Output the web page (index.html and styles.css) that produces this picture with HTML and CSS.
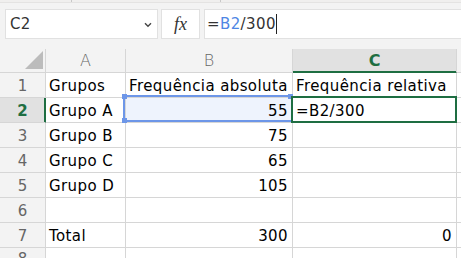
FILE: index.html
```html
<!DOCTYPE html>
<html lang="pt">
<head>
<meta charset="utf-8">
<title>Planilha</title>
<link rel="stylesheet" href="styles.css">
</head>
<body>
<div class="app">
  <div class="strip"><span class="tick tick-a"></span><span class="tick tick-b"></span></div>
  <div class="fbar">
    <div class="namebox">
      <span class="name">C2</span>
      <svg class="chev" width="8" height="6" viewBox="0 0 8 6"><path d="M1 1.2 L4 4.2 L7 1.2" fill="none" stroke="#444" stroke-width="1.4"/></svg>
    </div>
    <div class="fxbox"><span class="fx">fx</span></div>
    <div class="formula"><span>=</span><span class="ref">B2</span><span>/300</span><span class="caret"></span></div>
  </div>
  <div class="sheet">
    <div class="hd corner"><span class="tri"></span></div>
    <div class="hd col">A</div>
    <div class="hd col">B</div>
    <div class="hd col sel-col">C</div>
    <div class="hd col"></div>

    <div class="hd row">1</div>
    <div class="c">Grupos</div>
    <div class="c">Frequência absoluta</div>
    <div class="c">Frequência relativa</div>
    <div class="c"></div>

    <div class="hd row sel-row">2</div>
    <div class="c">Grupo A</div>
    <div class="c num refcell">55</div>
    <div class="c active">=B2/300</div>
    <div class="c"></div>

    <div class="hd row">3</div>
    <div class="c">Grupo B</div>
    <div class="c num">75</div>
    <div class="c"></div>
    <div class="c"></div>

    <div class="hd row">4</div>
    <div class="c">Grupo C</div>
    <div class="c num">65</div>
    <div class="c"></div>
    <div class="c"></div>

    <div class="hd row">5</div>
    <div class="c">Grupo D</div>
    <div class="c num">105</div>
    <div class="c"></div>
    <div class="c"></div>

    <div class="hd row">6</div>
    <div class="c"></div>
    <div class="c"></div>
    <div class="c"></div>
    <div class="c"></div>

    <div class="hd row">7</div>
    <div class="c">Total</div>
    <div class="c num">300</div>
    <div class="c num">0</div>
    <div class="c"></div>

    <div class="hd row last">8</div>
    <div class="c"></div>
    <div class="c"></div>
    <div class="c"></div>
    <div class="c"></div>
  </div>
</div>
</body>
</html>
```
FILE: styles.css
```css
* { box-sizing: border-box; }
html, body { margin: 0; padding: 0; }
body {
  width: 461px;
  height: 258px;
  overflow: hidden;
  background: #f3f3f3;
  font-family: "DejaVu Sans", sans-serif;
}
.app { display: flex; flex-direction: column; width: 461px; height: 258px; overflow: hidden; }

.strip {
  height: 4px;
  background: #f0efee;
  border-bottom: 1px solid #e4e3e2;
  display: flex;
  align-items: flex-start;
}
.tick { width: 1px; height: 2px; background: #c8c8c8; }
.tick-a { margin-left: 71px; }
.tick-b { margin-left: 148px; }

.fbar {
  display: flex;
  height: 46px;
  padding: 6px 0 10px 5px;
  background: #f3f3f3;
  gap: 3px;
}
.namebox, .fxbox, .formula {
  background: #fff;
  border: 1px solid #e1e1e1;
  height: 30px;
  display: flex;
  align-items: center;
}
.namebox { width: 153px; padding: 0 5px 0 4px; justify-content: space-between; }
.name { font-size: 15px; color: #333; letter-spacing: 0.4px; }
.chev { margin-top: 1px; }
.fxbox { width: 39px; justify-content: center; }
.fx { font-family: "Liberation Serif", serif; font-style: italic; font-size: 18px; color: #333; }
.formula { margin-left: 1px; flex: 1; padding-left: 2px; font-size: 15px; color: #333; margin-right: -20px; letter-spacing: 0.4px; }
.ref { color: #4f86e4; }
.caret { width: 1px; height: 20px; background: #222; margin-left: 0; }

.sheet {
  display: grid;
  grid-template-columns: 46px 80px 167px 164px 1fr;
  grid-template-rows: 24px repeat(8, 25px);
  background: #fff;
}
.hd {
  background: #f3f3f3;
  color: #666;
  border-right: 1px solid #d6d6d6;
  border-bottom: 1px solid #d6d6d6;
  font-size: 16px;
}
.corner { display: flex; align-items: flex-end; justify-content: flex-end; padding: 0 2px 3px 0; }
.tri {
  width: 18px; height: 18px;
  background: #bcbcbc;
  clip-path: polygon(100% 0, 100% 100%, 0 100%);
}
.col { text-align: center; line-height: 24px; font-weight: 300; }
.row { text-align: center; font-size: 15px; line-height: 22px; padding-top: 2px; }
.row.last { padding-top: 0; }
.sel-col {
  background: #e1e1e1;
  color: #1e6e42;
  font-weight: bold;
  border-bottom-color: #1e6e42;
  box-shadow: inset 0 -1px 0 #1e6e42;
}
.sel-row {
  background: #e1e1e1;
  color: #1e6e42;
  font-weight: bold;
  border-right-color: #1e6e42;
  box-shadow: inset -1px 0 0 #1e6e42;
}

.c {
  border-right: 1px solid #d6d6d6;
  border-bottom: 1px solid #d6d6d6;
  font-size: 15px;
  color: #000;
  line-height: 22px;
  letter-spacing: 0.4px;
  padding: 2px 4px 0 3px;
  white-space: nowrap;
  overflow: visible;
  position: relative;
}
.num { text-align: right; }
.refcell { background: #eef3fd; }
.refcell::after {
  content: "";
  position: absolute;
  left: -3px; top: -3px; right: -1px; bottom: 0;
  border: 2px solid #6d96e8;
  pointer-events: none;
}
.refcell::before {
  content: "";
  position: absolute;
  left: -4px; top: -4px;
  width: 5px; height: 5px;
  background: #6d96e8;
  box-shadow: 0 24px 0 #6d96e8, 166px 0 0 #6d96e8;
  z-index: 2;
}
.active { z-index: 3; }
.active::after {
  content: "";
  position: absolute;
  left: -2px; top: -2px; right: -1px; bottom: -1px;
  border: 2px solid #1e6e42;
  pointer-events: none;
}
```
